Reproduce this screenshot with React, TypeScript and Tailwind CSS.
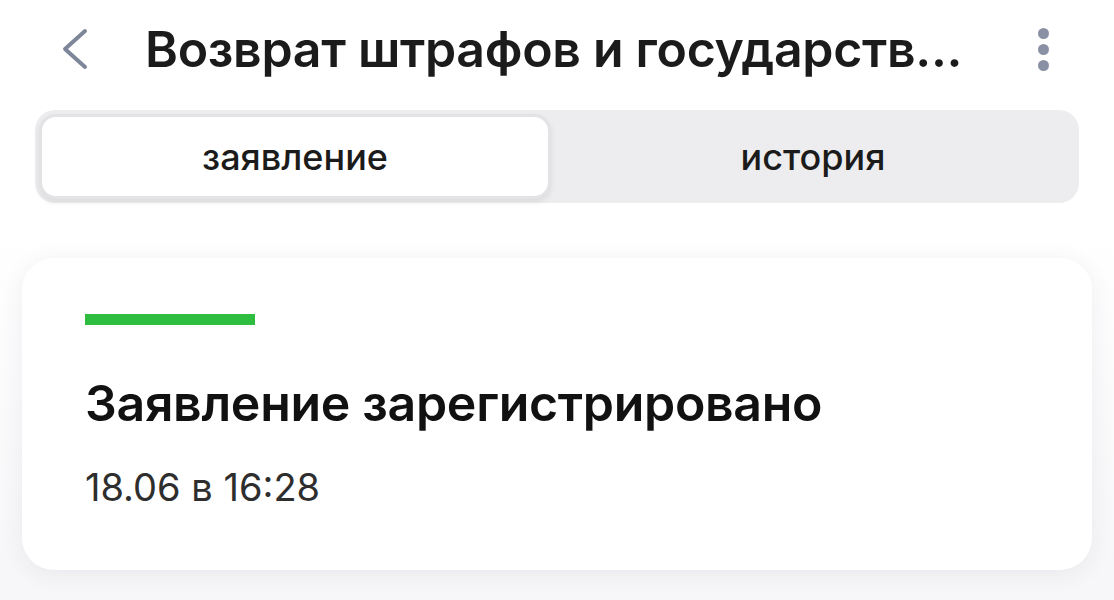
import React, { useState } from 'react';

const FONT = { fontFamily: 'Inter, "Noto Sans", sans-serif' };

export default function App() {
  const [tab, setTab] = useState<'form' | 'history'>('form');

  return (
    <div className="w-[1114px] h-[600px] bg-[#f7f7f9] text-[#1b1b1b] overflow-hidden" style={FONT}>
      {/* header */}
      <div className="bg-white">
        <div className="h-[98px] flex items-center pl-[58px] pr-[65px]">
          <button className="w-[32px] h-[44px] flex items-center justify-center text-[#7e879a]">
            <svg width="30" height="44" viewBox="0 0 30 44" fill="none">
              <path d="M26 4 L6 22 L26 40" stroke="currentColor" strokeWidth="4" strokeLinecap="round" strokeLinejoin="round" />
            </svg>
          </button>
          <h1 className="ml-[55px] text-[50px] font-semibold tracking-[-0.3px] leading-none whitespace-nowrap flex-1">
            Возврат штрафов и государств...
          </h1>
          <button className="flex flex-col gap-[5px] items-center">
            <span className="w-[11px] h-[11px] rounded-full bg-[#8a91a4]" />
            <span className="w-[11px] h-[11px] rounded-full bg-[#8a91a4]" />
            <span className="w-[11px] h-[11px] rounded-full bg-[#8a91a4]" />
          </button>
        </div>

        {/* tabs */}
        <div className="px-[35px] pt-[12px] pb-[24px]">
          <div className="h-[93px] bg-[#ededf0] rounded-[20px] p-[4px] flex">
            <button
              onClick={() => setTab('form')}
              className={
                tab === 'form'
                  ? 'w-[512px] rounded-[17px] bg-white border-[3px] border-[#e3e3e5] shadow-[0_3px_6px_rgba(0,0,0,0.08)] text-[36px] font-medium'
                  : 'flex-1 rounded-[17px] text-[36px] font-medium'
              }
            >
              заявление
            </button>
            <button
              onClick={() => setTab('history')}
              className={
                tab === 'history'
                  ? 'w-[512px] rounded-[17px] bg-white border-[3px] border-[#e3e3e5] shadow-[0_3px_6px_rgba(0,0,0,0.08)] text-[36px] font-medium'
                  : 'flex-1 rounded-[17px] text-[36px] font-medium'
              }
            >
              история
            </button>
          </div>
        </div>
      </div>

      {/* status card */}
      <div className="px-[22px] pt-[31px] bg-gradient-to-b from-white to-[#f7f7f9]">
        <div className="bg-white rounded-[32px] shadow-[0_4px_24px_rgba(40,40,80,0.07)] h-[312px] px-[63px] pt-[56px]">
          <div className="w-[170px] h-[11px] bg-[#2fbd40]" />
          <div className="mt-[53px] text-[50px] font-semibold leading-none tracking-[-0.3px] text-[#111]">
            Заявление зарегистрировано
          </div>
          <div className="mt-[40px] text-[38px] leading-none text-[#2e2e2e]">18.06 в 16:28</div>
        </div>
      </div>
    </div>
  );
}
